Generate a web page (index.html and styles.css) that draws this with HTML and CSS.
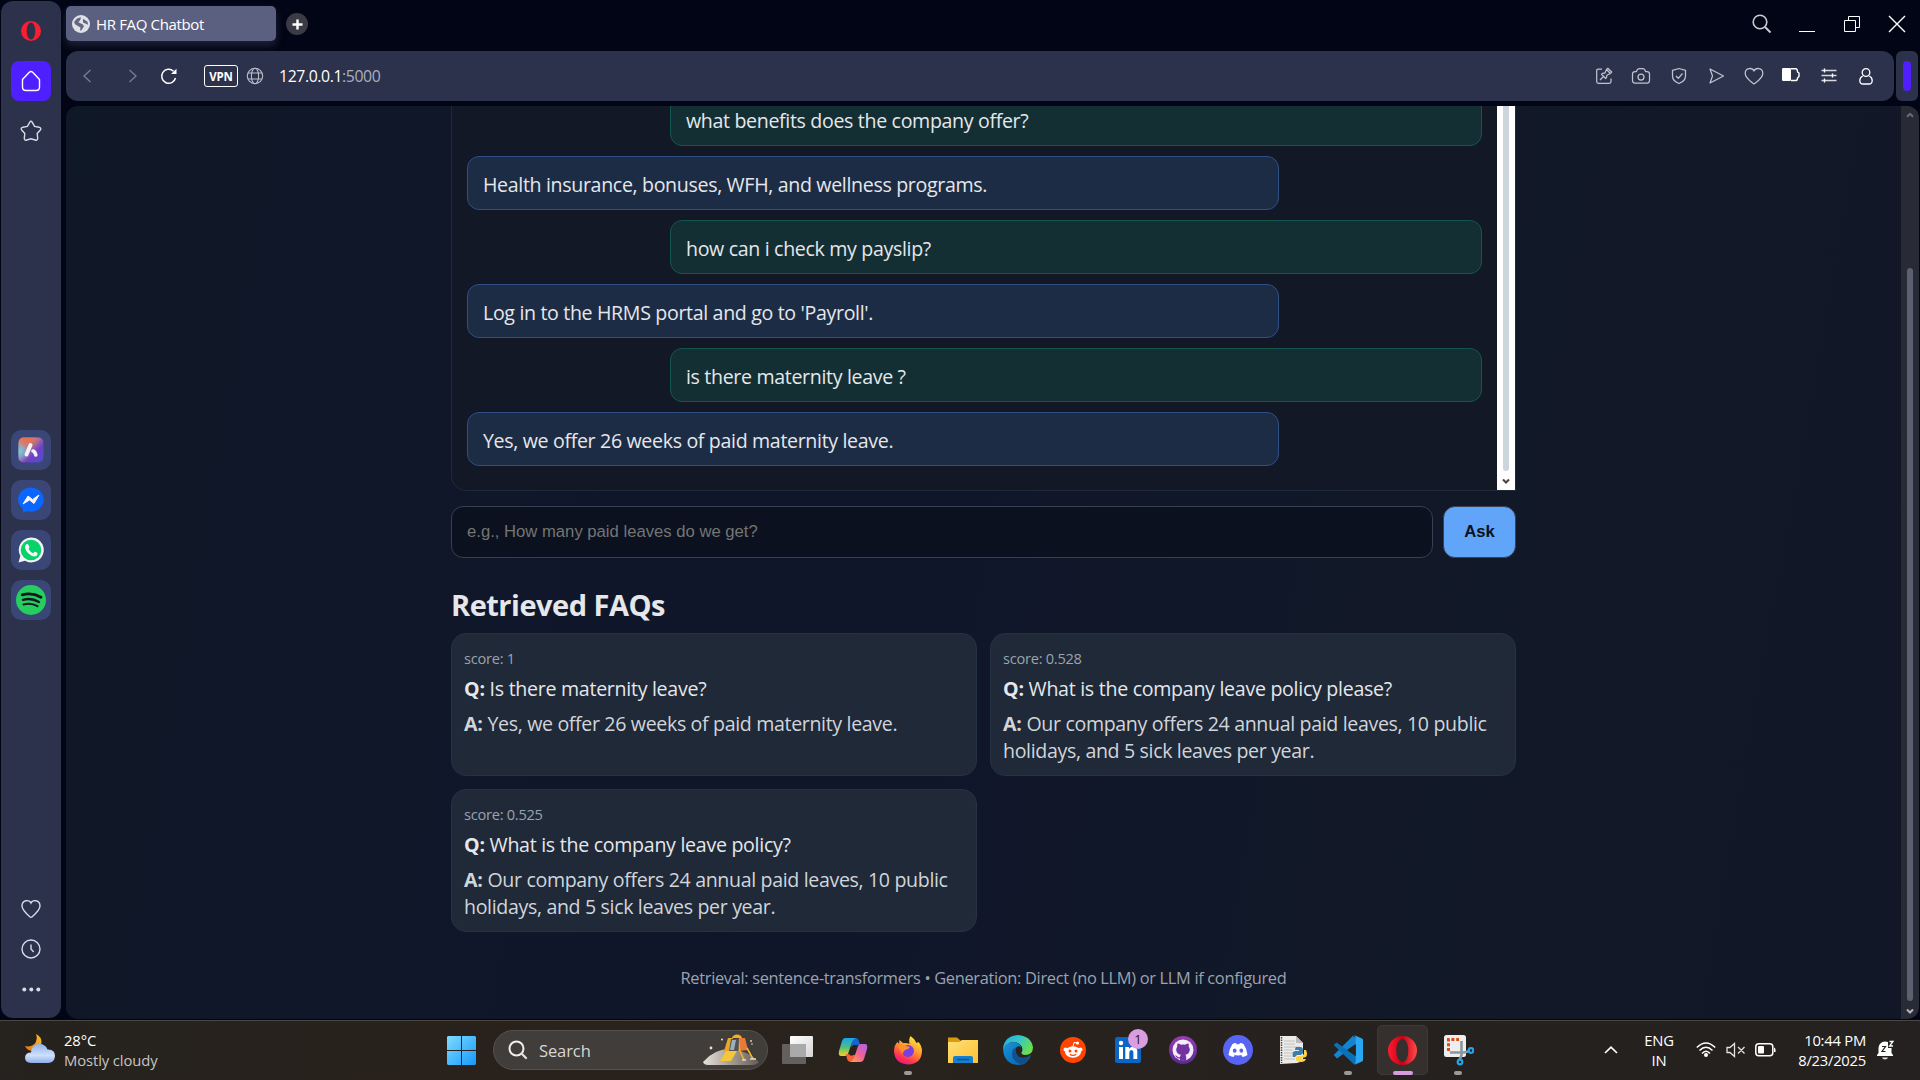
FILE: index.html
```html
<!DOCTYPE html>
<html lang="en">
<head>
<meta charset="utf-8">
<title>HR FAQ Chatbot</title>
<link rel="stylesheet" href="styles.css">
</head>
<body>
<div class="browser">
  <aside class="sidebar">
    <div class="side-item"><svg width="20" height="20" viewBox="0 0 20 20"><path fill="#fa1e2f" fill-rule="evenodd" d="M10 0a10 10 0 1 0 0 20a10 10 0 1 0 0-20ZM10 1.500c2.600 0 4.300 3.800 4.300 8.500s-1.700 8.500-4.300 8.500-4.300-3.800-4.300-8.500 1.700-8.500 4.300-8.500Z"/></svg></div>
    <div class="side-item home"><svg width="20" height="22" viewBox="0 0 20 22"><path class="ln" d="M1.500 9.500 8.300 2.300Q10 .8 11.700 2.300L18.500 9.500V17Q18.500 20.500 15 20.500H5Q1.500 20.500 1.500 17Z"/></svg></div>
    <div class="side-item star"><svg width="22" height="22" viewBox="0 0 22 22"><path class="ln" d="M9.700 2.300Q11 .3 12.300 2.300L14.600 6.400 19.300 7.300Q21.700 8 20.300 10L17.200 13.600 17.700 18.300Q17.600 20.800 15.300 20L11 18.800 6.700 20Q4.400 20.800 4.300 18.300L4.800 13.600 1.700 10Q.3 8 2.700 7.300L7.400 6.400Z"/></svg></div>
    <div class="side-apps">
      <div class="side-item app"><svg width="26" height="26" viewBox="0 0 26 26"><defs><linearGradient id="aria" x1="0" y1="0" x2="1" y2="1"><stop offset="0" stop-color="#e8805c"/><stop offset=".35" stop-color="#b77c9c"/><stop offset=".65" stop-color="#7040c4"/><stop offset="1" stop-color="#4a50cc"/></linearGradient><radialGradient id="aria2" cx="0" cy=".55" r=".45"><stop offset="0" stop-color="#66d6e8"/><stop offset="1" stop-color="#66d6e8" stop-opacity="0"/></radialGradient><radialGradient id="aria3" cx=".4" cy="0" r=".5"><stop offset="0" stop-color="#ec6f43"/><stop offset="1" stop-color="#ec6f43" stop-opacity="0"/></radialGradient></defs><rect x=".5" y=".5" width="25" height="25" rx="5" fill="url(#aria)"/><rect x=".5" y=".5" width="25" height="25" rx="5" fill="url(#aria2)"/><rect x=".5" y=".5" width="25" height="25" rx="5" fill="url(#aria3)"/><path d="M12.500 8 8.500 17.500" stroke="#f3f0f5" stroke-width="4" stroke-linecap="round"/><path d="M15 14 Q17 14.500 17.800 18" stroke="#f3f0f5" stroke-width="3.600" stroke-linecap="round" fill="none"/></svg></div>
      <div class="side-item app"><svg width="26" height="26" viewBox="0 0 26 26"><path fill="#0a66fc" d="M13 .5A12.500 12 0 0 1 13 24.800Q11 24.800 9.200 24.300L5 25.500 4.700 21.800A12.500 12 0 0 1 13 .5Z"/><path fill="#f3f5fb" d="M5 17 10 9 14.500 12.500 21 8 16 16.500 11.500 13Z" stroke="#f3f5fb" stroke-width="1" stroke-linejoin="round"/></svg></div>
      <div class="side-item app"><svg width="26" height="26" viewBox="0 0 26 26"><path fill="#f1f3f5" d="M.5 25.500 2.300 19A12.500 12.500 0 1 1 7 23.800Z"/><circle cx="13" cy="13" r="10.300" fill="#08d36b"/><path fill="#f4f7f5" d="M8.300 7.300Q9.500 6.300 10.400 7.700L11.400 10Q11.500 10.800 10.500 12 12.200 15 15.200 16.200L16.600 14.700Q17.200 14.500 19.500 16 19.800 18.800 17 19.500 14.500 20 10.500 16.500 6.700 12.700 7 9.500 7.200 8.200 8.300 7.300Z"/></svg></div>
      <div class="side-item app"><svg width="30" height="30" viewBox="0 0 30 30"><circle cx="15" cy="15" r="15" fill="#24cf5f"/><g fill="none" stroke="#101820" stroke-linecap="round"><path stroke-width="2.800" d="M6.300 9.800Q16 7.200 25 12.200"/><path stroke-width="2.400" d="M7 14.800Q15.500 12.500 23 17"/><path stroke-width="2" d="M7.500 19.500Q15 17.500 21.500 21.200"/></g></svg></div>
    </div>
    <div class="side-tools">
      <svg width="20" height="20" viewBox="0 0 20 20"><path class="ln" d="M10 4C8.500.5 1 .5 1 7 1 10.500 4 13.500 8.800 17.700Q10 18.700 11.200 17.700C16 13.500 19 10.500 19 7 19 .5 11.500.5 10 4Z"/></svg>
      <svg width="20" height="20" viewBox="0 0 20 20"><circle class="ln" cx="10" cy="10" r="9"/><path class="ln" d="M10 5.500V10L12.700 13"/></svg>
      <svg width="20" height="20" viewBox="0 0 20 20"><g fill="#d5dce8"><circle cx="3.300" cy="10.500" r="2"/><circle cx="10.300" cy="10.500" r="2"/><circle cx="17.300" cy="10.500" r="2"/></g></svg>
    </div>
  </aside>

  <div class="window">
    <header class="tabs">
      <div class="tab">
        <svg width="18" height="18" viewBox="0 0 18 18"><circle cx="9" cy="9" r="9" fill="#dfe1e8"/><path fill="#62667f" d="M5 3.500 9 2.200 8.300 5 6.300 7.200 10.500 9.300 12 11.200 9.500 15.300 8 15.600 8.500 12.400 3 9.200 2 7ZM11 3.800 15.600 6.800 16 9.800 13.300 8.600 11 7.500Z"/></svg>
        <span class="t-tab">HR FAQ Chatbot</span>
      </div>
      <div class="new-tab"><svg width="11" height="11" viewBox="0 0 11 11"><path d="M5.500.5V10.500M.5 5.500H10.500" stroke="#fff" stroke-width="2.400"/></svg></div>
      <div class="win-buttons">
        <svg width="20" height="20" viewBox="0 0 20 20"><circle cx="8" cy="8" r="6.800" fill="none" stroke="#c8cad2" stroke-width="1.600"/><path d="M13 13 18.500 18.500" stroke="#c8cad2" stroke-width="2"/></svg>
        <svg width="20" height="20" viewBox="0 0 20 20"><path d="M2 17.500H18" stroke="#fff"/></svg>
        <svg width="20" height="20" viewBox="0 0 20 20"><path fill="none" stroke="#fff" d="M2.500 6.500H13.500V17.500H2.500ZM6.500 6.500V2.500H17.500V13.500H13.500"/></svg>
        <svg width="20" height="20" viewBox="0 0 20 20"><path d="M2 2 18 18M18 2 2 18" stroke="#fff" stroke-width="1.400"/></svg>
      </div>
    </header>

    <div class="bars">
      <nav class="toolbar">
        <div class="nav-buttons">
          <svg width="10" height="14" viewBox="0 0 10 14"><path class="dim" d="M8.500 1 2 7 8.500 13"/></svg>
          <svg width="10" height="14" viewBox="0 0 10 14"><path class="dim" d="M1.500 1 8 7 1.500 13"/></svg>
          <svg width="18" height="18" viewBox="0 0 18 18"><path d="M13.500 4.200A7 7 0 1 0 15.500 11" fill="none" stroke="#fff" stroke-width="1.500"/><path d="M16.500 1.700V7H11Z" fill="#fff"/></svg>
        </div>
        <span class="vpn">VPN</span>
        <svg class="site" width="18" height="18" viewBox="0 0 18 18"><g fill="none" stroke="#b9bfca" stroke-width="1.100"><circle cx="9" cy="9" r="7.700"/><ellipse cx="9" cy="9" rx="3.600" ry="7.700"/><path d="M2 6H16M2 12H16"/></g></svg>
        <span class="url">127.0.0.1<span class="port">:5000</span></span>
        <div class="tools">
          <span class="tool"><svg width="18" height="18" viewBox="0 0 18 18"><path class="ic" d="M7 2H3.500Q1.700 2 1.700 4V14.500Q1.700 16.300 3.500 16.300H14.200Q16 16.300 16 14.500V11.500M11.500 2.500 12.800 1.300 16.700 5 15.400 6.500M11.500 2.500 15.400 6.500M11.500 2.500 9.800 6.200Q8 5.800 6.500 7.200L10.800 11.500Q12.200 10 11.800 8.200L15.400 6.500M8.500 9.500 5 13"/></svg></span>
          <span class="tool"><svg width="20" height="18" viewBox="0 0 20 18"><path class="ic" d="M5.500 4.500Q6 1.500 8.500 1.500H11.500Q14 1.500 14.500 4.500H16Q18.500 4.500 18.500 7V13.500Q18.500 16 16 16H4Q1.500 16 1.500 13.500V7Q1.500 4.500 4 4.500Z"/><circle class="ic" cx="10" cy="10" r="3"/></svg></span>
          <span class="tool"><svg width="16" height="18" viewBox="0 0 16 18"><path class="ic" d="M8 1.500 14.500 3.300V9Q14.500 14 8 16.500 1.500 14 1.500 9V3.300ZM5 9 7.300 11.300 11.500 6.500"/></svg></span>
          <span class="tool"><svg width="17" height="18" viewBox="0 0 17 18"><path class="ic" d="M2 2 15.500 9 2 16 4.500 9Z"/></svg></span>
          <span class="tool"><svg width="20" height="18" viewBox="0 0 20 18"><path class="ic" d="M10 4C8.500.5 1.200.2 1.200 6.500 1.200 10.500 6 14 8.900 16.300Q10 17.200 11.100 16.300C14 14 18.800 10.500 18.800 6.500 18.800.2 11.500.5 10 4Z"/></svg></span>
          <span class="tool"><svg width="18" height="18" viewBox="0 0 18 18"><path d="M9 1.700H14Q15.500 2 15.500 5L17 6V9.500L15.500 11Q15.500 13.500 14 13.500H9" fill="none" stroke="#fff" stroke-width="1.400"/><rect x="0" y="1" width="9" height="13" rx="1.200" fill="#fff"/></svg></span>
          <span class="tool"><svg width="16" height="18" viewBox="0 0 16 18"><path d="M.5 3.500H15.500M.5 8.500H15.500M.5 13.500H15.500" stroke="#d6d9e2" stroke-width="1.400"/><path d="M3.500 1.500V5.500M11.500 6.500V10.500M3.500 11.500V15.500" stroke="#fff" stroke-width="1.400"/></svg></span>
          <span class="tool"><svg width="16" height="18" viewBox="0 0 16 18"><circle cx="8" cy="5.500" r="3.800" fill="none" stroke="#fff" stroke-width="1.300"/><path d="M4.700 9Q1.800 10.500 1.800 13.500 1.800 17 5 17H11Q14.200 17 14.200 13.500 14.200 10.500 11.300 9" fill="none" stroke="#fff" stroke-width="1.300"/></svg></span>
        </div>
      </nav>
      <div class="panel-toggle"><i></i></div>
    </div>

    <div class="viewport">
      <main class="content">
        <div class="chat">
          <div class="messages">
            <div class="msg user">what benefits does the company offer?</div>
            <div class="msg bot">Health insurance, bonuses, WFH, and wellness programs.</div>
            <div class="msg user">how can i check my payslip?</div>
            <div class="msg bot">Log in to the HRMS portal and go to 'Payroll'.</div>
            <div class="msg user">is there maternity leave ?</div>
            <div class="msg bot">Yes, we offer 26 weeks of paid maternity leave.</div>
          </div>
          <div class="chat-scroll"><i></i><svg width="8" height="6" viewBox="0 0 8 6"><path d="M1 1.500 4 4.500 7 1.500" fill="none" stroke="#444" stroke-width="2"/></svg></div>
        </div>
        <div class="ask-row">
          <div class="ask-input">e.g., How many paid leaves do we get?</div>
          <div class="ask-button">Ask</div>
        </div>
        <h2>Retrieved FAQs</h2>
        <div class="cards">
          <article class="card"><div class="score">score: 1</div><p class="q"><b>Q:</b> Is there maternity leave?</p><p class="a"><b>A:</b> Yes, we offer 26 weeks of paid maternity leave.</p></article>
          <article class="card"><div class="score">score: 0.528</div><p class="q"><b>Q:</b> What is the company leave policy please?</p><p class="a"><b>A:</b> Our company offers 24 annual paid leaves, 10 public<br>holidays, and 5 sick leaves per year.</p></article>
          <article class="card"><div class="score">score: 0.525</div><p class="q"><b>Q:</b> What is the company leave policy?</p><p class="a"><b>A:</b> Our company offers 24 annual paid leaves, 10 public<br>holidays, and 5 sick leaves per year.</p></article>
        </div>
        <footer>Retrieval: sentence-transformers • Generation: Direct (no LLM) or LLM if configured</footer>
      </main>
      <div class="page-scroll">
        <svg width="8" height="6" viewBox="0 0 8 6"><path d="M1 4.800 4 1.800 7 4.800" fill="none" stroke="#6b6c72" stroke-width="2"/></svg>
        <i></i>
        <svg width="8" height="6" viewBox="0 0 8 6"><path d="M1 1.500 4 4.500 7 1.500" fill="none" stroke="#b5b6bb" stroke-width="2"/></svg>
      </div>
    </div>
  </div>
</div>

<div class="taskbar">
  <div class="weather">
    <svg width="32" height="32" viewBox="0 0 32 32"><defs><linearGradient id="cl" x1="0" y1="0" x2="0" y2="1"><stop offset="0" stop-color="#8fb2ee"/><stop offset=".6" stop-color="#cfe0fa"/><stop offset="1" stop-color="#8eaeea"/></linearGradient><linearGradient id="mn" x1="1" y1="0" x2="0" y2="1"><stop offset="0" stop-color="#f6c12f"/><stop offset="1" stop-color="#e9730f"/></linearGradient></defs><path fill="url(#mn)" d="M12 1Q18 4 17.500 10 16 18 8 18 3 17.500 1 13 7 14.500 10.500 11 14 6.500 12 1Z"/><path fill="url(#cl)" d="M7 30Q1 29.500 1 24.500 1.500 19.500 7 19.500 8 11 15.500 11 21.500 11 23.500 16.500 31 16 31 23 30.500 30 24 30Z"/></svg>
    <div class="weather-text"><div>28°C</div><div class="sub">Mostly cloudy</div></div>
  </div>
  <div class="dock">
    <div class="slot start"><svg width="29" height="29" viewBox="0 0 29 29"><defs><linearGradient id="win" x1="0" y1="0" x2="1" y2="1"><stop offset="0" stop-color="#7fdcff"/><stop offset="1" stop-color="#1598fb"/></linearGradient></defs><path fill="url(#win)" d="M1 0H14V14H0V1ZM15 0H28L29 1V14H15ZM0 15H14V29H1L0 28ZM15 15H29V28L28 29H15Z"/></svg></div>
    <div class="search">
      <svg width="20" height="20" viewBox="0 0 20 20"><circle cx="8.500" cy="8.500" r="7" fill="none" stroke="#eee" stroke-width="2"/><path d="M13.500 13.500 18 18" stroke="#ddd" stroke-width="2.400" stroke-linecap="round"/></svg>
      <span>Search</span>
      <svg class="lander" width="58" height="32" viewBox="0 0 58 32"><defs><linearGradient id="hill"><stop offset="0" stop-color="#e6e1db"/><stop offset=".5" stop-color="#a69c92"/><stop offset="1" stop-color="#655c57"/></linearGradient></defs><path fill="url(#hill)" d="M1 28Q12 15 28 15 45 16 57 28 55 31 50 31H6Q2 31 1 28Z"/><path d="M30 4Q31 .5 35 .5 39 .5 40 4Z" fill="#f2b11e"/><path fill="#e8a528" d="M26 4H31L28 17H22Z"/><path fill="#4b535f" d="M29 5H37L36 17H27Z"/><path fill="#9eafbb" d="M30 6H34L32 16H28Z"/><path fill="#e97936" d="M37 4H43L46 16 37 17Z"/><path fill="#f0b52c" d="M37 4 38.500 17H36.500Z"/><path fill="#f3c63c" d="M24 17H35L29 27H18Z"/><path d="M45 14 51 25M38 17 42 26" stroke="#f0b52c" stroke-width="1.600"/><path d="M48 25H54M40 26H44" stroke="#ddd" stroke-width="1.400"/><g fill="#efe2bc"><circle cx="9" cy="14" r="1.400"/><circle cx="20" cy="5.500" r="1"/><circle cx="49" cy="7" r=".9"/><circle cx="50" cy="10" r=".8"/></g></svg>
    </div>
    <div class="slot"><svg width="32" height="32" viewBox="0 0 32 32"><defs><linearGradient id="tv" x1="0" y1="0" x2="1" y2="1"><stop offset="0" stop-color="#fff"/><stop offset="1" stop-color="#d5d5d5"/></linearGradient></defs><rect x="8" y="2" width="23" height="21" rx="1" fill="url(#tv)"/><rect x="0" y="10" width="24" height="20" rx="1" fill="#6c6c6c" fill-opacity=".85"/><rect x="8" y="10" width="16" height="13" fill="#aaa"/></svg></div>
    <div class="slot"><svg width="30" height="28" viewBox="0 0 30 28"><defs><linearGradient id="cpa" x1="0" y1="0" x2="0" y2="1"><stop offset="0" stop-color="#13a7f0"/><stop offset=".5" stop-color="#4fbd83"/><stop offset="1" stop-color="#f2d21c"/></linearGradient><linearGradient id="cpb" x1="1" y1="0" x2="0" y2="1"><stop offset="0" stop-color="#a765ec"/><stop offset=".5" stop-color="#f05f9a"/><stop offset="1" stop-color="#ffb13b"/></linearGradient></defs><path fill="#1763d1" d="M14 2H18Q20 2 21 5L22 9H17Q14 9 13 12Z"/><path fill="url(#cpa)" d="M7 2H18Q15 3 14 6L10 18Q9 20 7 20H3Q0 20 1 15L4 5Q5 2 7 2Z"/><path fill="#f55f3b" d="M8 18 9 23Q10 26 13 26H18L17 19Z"/><path fill="url(#cpb)" d="M23 8H27Q30 8 29 13L26 23Q25 26 22 26H12Q15 25 16 22L20 10Q21 8 23 8Z"/><path fill="#2a231d" d="M15.500 9H19.500L15 19.500H11.500Z"/></svg></div>
    <div class="slot run"><svg width="30" height="30" viewBox="0 0 30 30"><defs><linearGradient id="ff" x1=".8" y1="0" x2=".3" y2="1"><stop offset="0" stop-color="#fff044"/><stop offset=".45" stop-color="#ff9a2e"/><stop offset=".8" stop-color="#ff3350"/><stop offset="1" stop-color="#e31587"/></linearGradient></defs><path fill="url(#ff)" d="M17.500 1Q22 4 23.500 8L25.500 7Q29 11 29 16 28.500 29 15 29.500 1.500 28.500 1 16 1.200 10 4.500 7L6 9 6.500 5 10 8Q14 7.500 16.500 9 15.500 4 17.500 1Z"/><circle cx="15" cy="16" r="6" fill="#7a3fe4"/><path fill="#ff8f2a" d="M5 12Q8 9 13 11L17 12Q15 15 12 15 10 17 9.500 19Z"/></svg></div>
    <div class="slot"><svg width="32" height="28" viewBox="0 0 32 28"><defs><linearGradient id="fo" x1="0" y1="0" x2="1" y2="1"><stop offset="0" stop-color="#ffdf78"/><stop offset="1" stop-color="#fdc12f"/></linearGradient></defs><path fill="#d99a0b" d="M1 1.500H10L14 5H26V10H1Z"/><path fill="url(#fo)" d="M1 6H12L15 4H31V27H1Z"/><path fill="#157fd1" d="M6 27V22Q6 20 8 20H24Q26 20 26 22V27Z"/><path d="M10 23.500H22" stroke="#0c5894" stroke-width="1.600"/></svg></div>
    <div class="slot"><svg width="30" height="30" viewBox="0 0 30 30"><defs><linearGradient id="ea" x1="0" y1="0" x2="1" y2=".5"><stop offset="0" stop-color="#25a8e0"/><stop offset=".5" stop-color="#34c5cc"/><stop offset="1" stop-color="#68de52"/></linearGradient><linearGradient id="eb" x1="0" y1="0" x2="1" y2="1"><stop offset="0" stop-color="#1695dd"/><stop offset="1" stop-color="#0c59a6"/></linearGradient></defs><path fill="url(#eb)" d="M0 14Q3 7 11 7 17 8 18 12 14 10 12.500 14 12 19 16 22 22 24 28 20 25 30 15 30 1 29 0 14Z"/><path fill="url(#ea)" d="M0 14Q1 1 15 0 28 1 30 12 30 20 22 20 18 19.500 18.500 17.500 20 16 19 12 16 6.500 9.500 7 3 8 0 14Z"/><path fill="#10477f" opacity=".75" d="M12.500 14Q12 20 17 22.500 23 24 28 20 24 29 17 29 9 25 9 19 9 14 13.500 12Z"/></svg></div>
    <div class="slot"><svg width="26" height="26" viewBox="0 0 26 26"><circle cx="13" cy="13" r="13" fill="#ff4500"/><g fill="#fff"><ellipse cx="13" cy="15" rx="8" ry="5.800"/><circle cx="5.500" cy="12.500" r="2"/><circle cx="20.500" cy="12.500" r="2"/><circle cx="17.500" cy="6" r="1.600"/></g><path d="M13 9.500 14 5.500 17 6" fill="none" stroke="#fff"/><g fill="#ff4500"><circle cx="10" cy="14" r="1.500"/><circle cx="16" cy="14" r="1.500"/></g><path d="M9.800 17.300Q13 19.500 16.200 17.300" fill="none" stroke="#ff4500" stroke-width="1.200"/></svg></div>
    <div class="slot linkedin"><svg width="26" height="26" viewBox="0 0 26 26"><rect width="26" height="26" rx="2" fill="#0a66c2"/><g fill="#fff"><circle cx="6" cy="6" r="2.200"/><rect x="4" y="10" width="4" height="12"/><path d="M10.300 10H14V11.700Q15.500 9.700 18 9.700 22.300 9.700 22.300 14.500V22H18.400V15.500Q18.400 13 16.500 13 14.300 13 14.300 15.500V22H10.300Z"/></g></svg><span class="badge">1</span></div>
    <div class="slot"><svg width="28" height="28" viewBox="0 0 28 28"><defs><linearGradient id="gh" x1="0" y1="0" x2="0" y2="1"><stop offset="0" stop-color="#9a3bb4"/><stop offset="1" stop-color="#5a2a91"/></linearGradient></defs><circle cx="14" cy="14" r="14" fill="url(#gh)"/><circle cx="14" cy="14" r="10.500" fill="#f3edf7"/><path fill="#7431a2" d="M8.500 7.500Q10 7.500 12 8.800 14 8.300 16 8.800 18 7.500 19.500 7.500 20 9 19.700 10.500 21 12 20.800 14 20.300 18 16.300 18.700 17.200 19.500 17.200 21V24.800H11V22.500Q8.500 23 7.500 21.200L6 19.500Q7.500 19.300 8.500 20.700 9.500 21.700 11 21 11.100 19.500 11.900 18.700 7.500 18 7.200 14 7.200 12 8.300 10.500 8 9 8.500 7.500Z"/></svg></div>
    <div class="slot"><svg width="30" height="30" viewBox="0 0 30 30"><circle cx="15" cy="15" r="15" fill="#5865f2"/><path fill="#fff" d="M9.500 9Q11 8.200 13 8L13.700 9.200H16.300L17 8Q19 8.200 20.500 9 24 14 24.500 20 22.500 21.700 19.500 22L18.300 20.200 19.500 19.600Q15 21.300 10.500 19.600L11.700 20.200 10.500 22Q7.500 21.700 5.500 20 6 14 9.500 9Z"/><ellipse cx="11.700" cy="15.700" rx="1.900" ry="2.100" fill="#5865f2"/><ellipse cx="18.300" cy="15.700" rx="1.900" ry="2.100" fill="#5865f2"/></svg></div>
    <div class="slot"><svg width="30" height="30" viewBox="0 0 30 30"><path fill="#ecebe8" d="M2 1H18L25 8V26L19 28 2 29Z"/><path fill="#bbb" d="M18 1 25 8H18Z"/><path d="M3.500 2V28" stroke="#444" stroke-width="1.500" stroke-dasharray="1.500 1"/><path d="M6 6H17M6 9H17M6 12H22M6 15H15M6 18H15M6 21H15M6 24H17" stroke="#c2c2c2"/><path fill="#3d7eb0" d="M18 12H23Q25 12.500 25 15V18L23 20H19L17 22H15Q14 19 15 17L17 16H21V15H17Q17 12.500 18 12Z"/><path fill="#ffd23e" d="M26 15H28Q30 19 28 22L24 23V24H28Q27 27 23 27 19 27 18 25V22L20 21H24L26 19Z"/></svg></div>
    <div class="slot run"><svg width="30" height="30" viewBox="0 0 30 30"><path fill="#1484ce" d="M.7 20 20 .8 24 4V9L4 23.500Z"/><path fill="#0c70b7" d="M.7 10 3.500 7.500 24 22V27L21 29.500Z"/><path fill="#29a7f2" d="M21 0 29 3.500Q30 4 30 5V25Q30 26 29 26.500L21 30Q22.700 29 22.700 26V4Q22.700 1 21 0Z"/><path fill="#29231f" d="M22.700 9V21L14 15Z"/></svg></div>
    <div class="slot run active"><svg width="29" height="29" viewBox="0 0 29 29"><defs><linearGradient id="op" x1="0" y1="0" x2="1" y2="0"><stop offset="0" stop-color="#ff1b2d"/><stop offset=".5" stop-color="#c80016"/><stop offset="1" stop-color="#ff4b4b"/></linearGradient></defs><path fill="url(#op)" fill-rule="evenodd" d="M14.500 0A14.500 14.500 0 1 0 14.500 29A14.500 14.500 0 1 0 14.500 0ZM14.500 3C18 3 20.300 8 20.300 14.500S18 26 14.500 26 8.200 21 8.200 14.500 11 3 14.500 3Z"/></svg></div>
    <div class="slot run"><svg width="32" height="32" viewBox="0 0 32 32"><rect x="2" y="1" width="22" height="22" rx="2.500" fill="#eee"/><path d="M6.500 17V5.500H17" fill="none" stroke="#dc4a16" stroke-width="3" stroke-dasharray="3 1.800"/><path d="M19.500 7V21L17.500 26M8 18.500H22L28 17" fill="none" stroke="#8c969e" stroke-width="2.600"/><g fill="none" stroke="#22a4e6" stroke-width="2.200"><circle cx="29" cy="16.500" r="2.300"/><circle cx="18" cy="28" r="2.300"/></g></svg></div>
  </div>
  <div class="tray">
    <svg class="t-up" width="14" height="8" viewBox="0 0 14 8"><path d="M1 7 7 1.200 13 7" fill="none" stroke="#fff" stroke-width="1.700"/></svg>
    <div class="lang">ENG<br>IN</div>
    <svg class="t-wifi" width="20" height="16" viewBox="0 0 20 16"><g fill="none" stroke="#fff" stroke-width="1.500"><path d="M.8 5.500Q10-3.500 19.200 5.500M3.500 8.500Q10 2 16.500 8.500M6 11.500Q10 7 14 11.500"/></g><circle cx="10" cy="13" r="2" fill="#fff"/></svg>
    <svg class="t-vol" width="20" height="16" viewBox="0 0 20 16"><path d="M1 5.500H4L8.500 1.500V14.500L4 10.500H1ZM12 5 18.500 11.500M18.500 5 12 11.500" fill="none" stroke="#e4e4e4" stroke-width="1.300"/></svg>
    <svg class="t-bat" width="21" height="14" viewBox="0 0 21 14"><rect x=".8" y=".8" width="17" height="12" rx="3" fill="none" stroke="#fff" stroke-width="1.500"/><rect x="3" y="3" width="6" height="7.600" rx="1" fill="#fff"/><path d="M19 4.500Q21 5 20.500 9H19Z" fill="#fff"/></svg>
    <div class="clock">10:44 PM<br>8/23/2025</div>
    <svg class="t-bell" width="20" height="20" viewBox="0 0 20 20"><path fill="#fff" d="M1 15 2.500 13V8Q3 2 9 1.500L12 2V8H15.500V13L17 15V16H1Z"/><path fill="#ddd" d="M6 17.500H12Q11.500 19.500 9 19.500T6 17.500Z"/><path d="M6 6.500H9.500L6 11.500H9.500" fill="none" stroke="#27221f" stroke-width="1.200"/><path d="M13.500 1.500H17L13.500 6H17" fill="none" stroke="#fff" stroke-width="1.300"/></svg>
  </div>
</div>
</body>
</html>
```
FILE: styles.css
```css
* { box-sizing: border-box; }

body {
  margin: 0;
  width: 1920px;
  height: 1080px;
  overflow: hidden;
  display: flex;
  flex-direction: column;
  background: #020515;
  color: #e5e7eb;
  font-family: "Open Sans", "Noto Sans", sans-serif;
}
svg { display: block; flex: none; }
p, h2 { margin: 0; }
.ln { fill: none; stroke: #d5dce8; stroke-width: 1.4; }
.ic { fill: none; stroke: #bec4cf; stroke-width: 1.25; stroke-linejoin: round; }
.dim { fill: none; stroke: #757c90; stroke-width: 1.4; }

.browser { height: 1020px; display: flex; gap: 5px; padding: 1px 1px 1px 1px; }

/* Sidebar */
.sidebar {
  width: 60px;
  height: 1017px;
  background: #2c324b;
  border-radius: 12px;
  display: flex;
  flex-direction: column;
  align-items: center;
  gap: 10px;
  padding-top: 10px;
}
.side-item {
  width: 40px;
  height: 40px;
  border-radius: 8px;
  display: flex;
  align-items: center;
  justify-content: center;
}
.home { background: #501fff; }
.home .ln { stroke: #fff; }
.side-apps { margin-top: 269px; display: flex; flex-direction: column; gap: 10px; }
.app { background: #3a4675; border-radius: 10px; }
.side-tools { margin-top: 269px; display: flex; flex-direction: column; gap: 20px; }

/* Window frame */
.window { flex: 1; display: flex; flex-direction: column; }
.tabs { height: 50px; display: flex; padding-top: 5px; }
.tab {
  width: 210px;
  height: 35px;
  border-radius: 5px;
  background: #5c6080;
  box-shadow: 0 4px 8px rgba(92, 96, 128, .35);
  display: flex;
  align-items: center;
  gap: 6px;
  padding-left: 6px;
  font-size: 15px;
  color: #fff;
}
.t-tab { letter-spacing: -.35px; }
.new-tab {
  width: 22px;
  height: 22px;
  margin: 7px 0 0 10px;
  border-radius: 50%;
  background: #3a3b44;
  display: flex;
  align-items: center;
  justify-content: center;
}
.win-buttons { margin-left: auto; padding: 8px 12px 0 0; display: flex; gap: 25px; }

.bars { height: 50px; display: flex; gap: 2px; }
.toolbar {
  width: 1828px;
  background: #2c324b;
  border-radius: 12px;
  display: flex;
  align-items: center;
  padding: 0 9px 0 16px;
}
.nav-buttons { width: 122px; display: flex; align-items: center; }
.nav-buttons svg + svg { margin-left: 36px; }
.nav-buttons svg:last-child { margin-left: 22px; }
.vpn {
  width: 34px;
  height: 22px;
  border: 1px solid #fff;
  border-radius: 3px;
  color: #fff;
  font-size: 11.5px;
  font-weight: 700;
  line-height: 21px;
  text-align: center;
  letter-spacing: -.2px;
}
.site { margin: 0 15px 0 8px; }
.url { font-size: 15.8px; color: #fff; letter-spacing: -.4px; }
.port { color: #aab0bf; }
.tools { margin-left: auto; display: flex; }
.tool { width: 37.5px; display: flex; justify-content: center; }
.panel-toggle {
  width: 22px;
  background: #2c324b;
  border-radius: 6px;
  display: flex;
  align-items: center;
  justify-content: center;
}
.panel-toggle i { width: 8px; height: 30px; border-radius: 4px; background: #501fff; }

/* Web page */
.viewport {
  margin-top: 5px;
  height: 913px;
  border-radius: 12px;
  overflow: hidden;
  display: flex;
  background: linear-gradient(100deg, #0f1827, #10162a 40%, #111827 75%, #111727);
}
.content { width: 1065px; margin-left: 385px; display: flex; flex-direction: column; }
.chat {
  height: 385px;
  display: flex;
  overflow: hidden;
  background: #121826;
  border: 1px solid #1f2937;
  border-top: 0;
  border-radius: 0 0 0 15px;
}
.messages {
  flex: 1;
  display: flex;
  flex-direction: column;
  justify-content: flex-end;
  gap: 10px;
  padding: 0 15px 24px;
}
.msg {
  flex: none;
  width: 812px;
  height: 54px;
  padding: 0 15px;
  border: 1px solid;
  border-radius: 12px;
  font-size: 19.6px;
  line-height: 55px;
  letter-spacing: -.34px;
}
.user { align-self: flex-end; background: #132f33; border-color: #11574e; }
.bot { background: #1d2c45; border-color: #2f4f85; }
.chat-scroll {
  width: 18px;
  background: #fff;
  display: flex;
  flex-direction: column;
  align-items: center;
}
.chat-scroll i { width: 6px; height: 365px; border-radius: 0 0 3px 3px; background: #cbd5db; margin-bottom: 7px; }

.ask-row { display: flex; gap: 10px; margin-top: 15px; font-family: "Liberation Sans", sans-serif; }
.ask-input, .ask-button {
  height: 52px;
  border: 1px solid #374151;
  border-radius: 12px;
  line-height: 49px;
}
.ask-input { flex: 1; padding-left: 15px; background: #0b111e; color: #757575; font-size: 16.67px; }
.ask-button { width: 73px; background: #60a5fa; color: #0b1220; font-size: 16.67px; font-weight: 700; text-align: center; }

h2 { margin-top: 27px; height: 48px; font-size: 29px; line-height: 39px; letter-spacing: -.5px; }
.cards { display: grid; grid-template-columns: 526px 526px; gap: 13px; }
.card {
  height: 143px;
  padding: 12px;
  border: 1px solid #263146;
  border-radius: 15px;
  background: #1f2937;
}
.score { height: 24px; font-size: 14.6px; line-height: 24px; letter-spacing: -.25px; color: #9ca3af; }
.q, .a { font-size: 19.6px; line-height: 27px; letter-spacing: -.35px; white-space: nowrap; }
.q { height: 34px; line-height: 38px; letter-spacing: -.29px; }
.a { padding-top: 6px; color: #d1d5db; }
.q b, .a b { letter-spacing: -.2px; }
footer { margin-top: 33px; text-align: center; font-size: 16.4px; line-height: 25px; letter-spacing: -.32px; color: #9ca3af; white-space: nowrap; }

.page-scroll {
  width: 18px;
  margin-left: auto;
  background: #282b36;
  display: flex;
  flex-direction: column;
  align-items: center;
  padding: 6px 0 5px;
}
.page-scroll i { width: 6px; height: 733px; margin: 150px 0 auto; border-radius: 3px; background: #5c606f; }

/* Taskbar */
.taskbar {
  height: 60px;
  display: flex;
  background: linear-gradient(90deg, #25221f, #29221c 22%, #29231d 45%, #25211f 75%, #252120);
  border-top: 1px solid #4b4743;
  color: #fff;
}
.weather { width: 434px; padding: 12px 0 0 24px; display: flex; gap: 8px; font-size: 14.8px; line-height: 20px; }
.weather-text { margin-top: -3px; letter-spacing: -.1px; }
.sub { color: #c8c5c2; }
.dock { display: flex; align-items: center; padding-bottom: 1px; }
.slot { width: 55px; height: 50px; display: flex; align-items: center; justify-content: center; position: relative; }
.start { margin: 0 4px 0 0; }
.search {
  width: 275px;
  height: 40px;
  margin-right: 2px;
  border: 1px solid #55514d;
  border-radius: 20px;
  background: #403d3a;
  display: flex;
  align-items: center;
  padding: 0 7px 0 14px;
  font-size: 16.5px;
  letter-spacing: -.1px;
  color: #d8d6d4;
}
.search span { margin-left: 11px; }
.lander { margin-left: auto; }
.run::after {
  content: "";
  position: absolute;
  bottom: 0;
  width: 8px;
  height: 4px;
  border-radius: 2px;
  background: #9c9a98;
}
.active::before {
  content: "";
  position: absolute;
  inset: 0 2px;
  border: 1px solid #3d3936;
  border-radius: 5px;
  background: #35302e;
}
.active svg { position: relative; }
.active::after { width: 20px; background: #d79be0; }
.badge {
  position: absolute;
  left: 28px;
  top: 4px;
  width: 20px;
  height: 20px;
  border-radius: 50%;
  background: #d99de0;
  color: #29152c;
  font-size: 13px;
  line-height: 20px;
  text-align: center;
}
.tray { margin-left: auto; padding: 0 24px 1px 0; display: flex; align-items: center; font-size: 14.8px; line-height: 20px; letter-spacing: -.25px; }
.lang { width: 40px; margin: 0 17px 0 21px; text-align: center; }
.t-vol { margin-left: 10px; }
.t-bat { margin-left: 9px; }
.clock { width: 80px; margin: 0 10px 0 10px; text-align: right; }
```
